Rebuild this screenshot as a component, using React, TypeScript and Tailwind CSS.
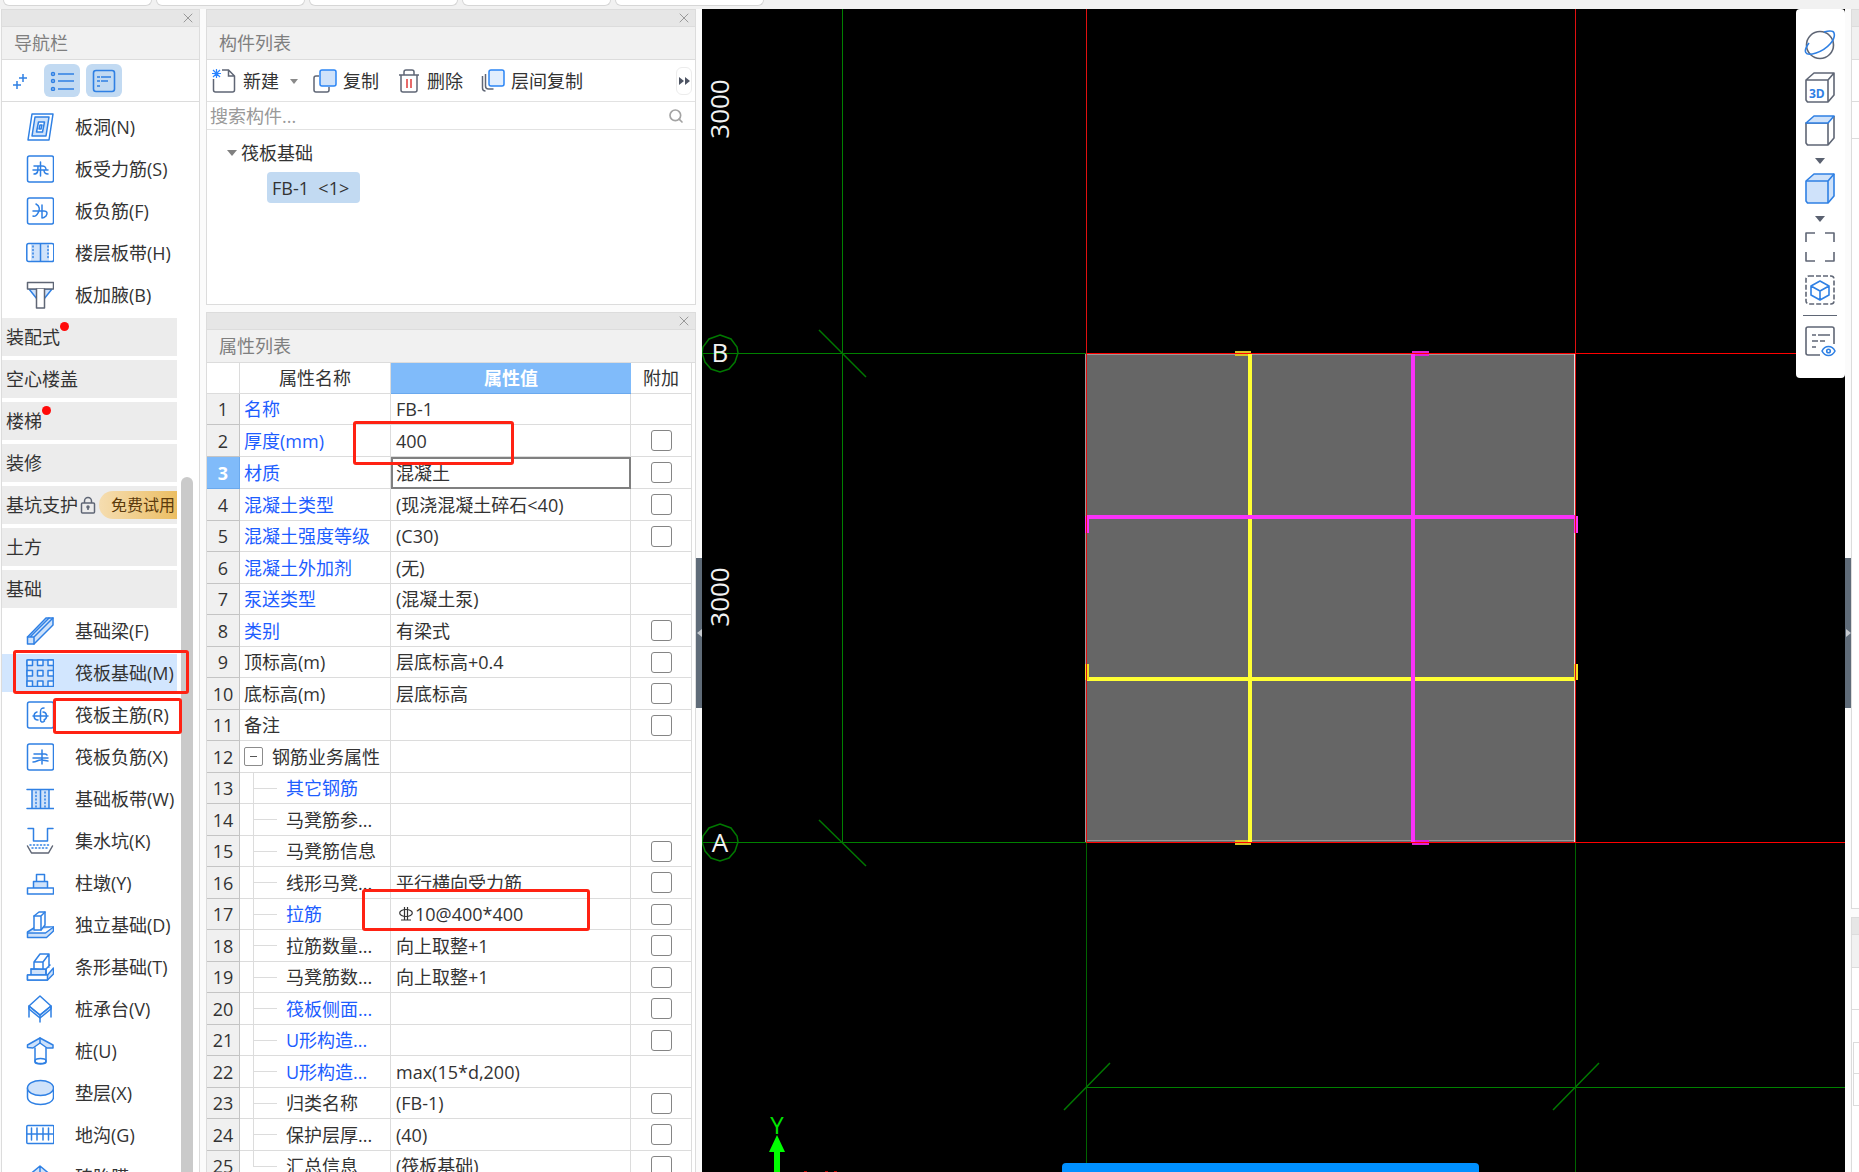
import type { ReactNode } from "react";
import { Search, X } from "lucide-react";

const BLUE = "#2f80e4";
const LIGHT = "#cfe2fa";
const GREY = "#5f6675";

const Icon = ({ children }: { children: ReactNode }) => (
  <svg viewBox="0 0 28 28" className="size-7 shrink-0" fill="none" stroke={BLUE} strokeWidth="1.5" strokeLinejoin="round" strokeLinecap="round" aria-hidden="true">
    {children}
  </svg>
);

const Frame = () => <rect x="1.5" y="1" width="26" height="26" rx="2" />;

const icons: Record<string, ReactNode> = {
  hole: (
    <>
      <path d="M6 1h21l-4 26H2z" />
      <path d="M9 4h14l-3 19H6z" fill={LIGHT} />
      <path d="M12.500 9h6l-2 10h-6z" fill="#fff" />
      <path d="M14 12h2l-1 4h-2z" />
    </>
  ),
  force: (
    <>
      <Frame />
      <path d="M14.500 7v14M8 11h8c4 0 4 2 4 4M7 15h15M8 19c4 0 4-3 4-8M18 15c0 3 1 4 4 4" />
    </>
  ),
  negative: (
    <>
      <Frame />
      <path d="M10 7c4 2 4 6 2 9-1 2-3 4-5 3M16 8v13M7 14h11c3 0 4 2 2 5M16 21c2 0 3-1 4-2" />
    </>
  ),
  strip: (
    <>
      <path d="M5 5h18v17H5z" fill={LIGHT} stroke="none" />
      <rect x="0.800" y="4.500" width="27" height="18" rx="2" />
      <path d="M14.500 5v17" />
      <path d="M7 7v14M22 7v14" strokeDasharray="1 2.500" />
    </>
  ),
  haunch: (
    <>
      <path d="M3 8l8 10V8zM26 8l-8 10V8z" fill={LIGHT} />
      <path d="M1.500 1.500h26V8h-26z" stroke={GREY} fill="#fff" />
      <path d="M10.500 8v19h8V8" stroke={GREY} fill="#fff" />
    </>
  ),
  beam: (
    <>
      <path d="M1.500 20L20 1h7v7L8 27H1.500z" fill={LIGHT} />
      <path d="M1.500 20H8v7M8 20L27 1M4 20L23 1" />
    </>
  ),
  raft: (
    <>
      <rect x="1" y="1" width="26.500" height="26.500" rx="1" fill={LIGHT} />
      <path d="M1 1h5.500v5.500H1zM11.500 1h5.500v5.500h-5.500zM22 1h5.500v5.500H22zM1 11.500h5.500V17H1zM11.500 11.500h5.500V17h-5.500zM22 11.500h5.500V17H22zM1 22h5.500v5.500H1zM11.500 22h5.500v5.500h-5.500zM22 22h5.500v5.500H22z" fill="#eef5fe" />
    </>
  ),
  mainBar: (
    <>
      <Frame />
      <path d="M18 7c-3 0-3.500 1-3.500 4v8c0 2 2 3 4 1M7 15h15M11 11c-4 1-4 8 1 8M17 11c4 0 5 6 1 8" />
    </>
  ),
  negBar: (
    <>
      <Frame />
      <path d="M16 7v14M8 11h11c1 0 2 1 2 1M7 15h15M7 19c4 0 4-2 8-2 4 0 4 1 7 1" />
    </>
  ),
  baseStrip: (
    <>
      <path d="M6 5h17v18H6z" fill={LIGHT} stroke="none" />
      <path d="M1 4.500h27M1 23.500h27M14.500 5v18M6 5v18M23 5v18" />
      <path d="M10 7v15M19 7v15" strokeDasharray="1 2.500" />
    </>
  ),
  sump: (
    <>
      <path d="M2 1.500h5.500V14h14V1.500H27" />
      <path d="M4 18h20M6 21h17" strokeDasharray="1 2.500" />
      <path d="M1.500 19l4 7h17l4-7" stroke={GREY} />
    </>
  ),
  pier: (
    <>
      <path d="M10.500 5.500h8v9h-8z" />
      <path d="M7.500 12.500h14v7h-14z" fill={LIGHT} />
      <path d="M1.500 19h26v6h-26z" fill="#fff" />
    </>
  ),
  isolated: (
    <>
      <path d="M1.500 21l8-5h18v4l-7 6.500h-19z" fill={LIGHT} />
      <path d="M1.500 22h18l8-6M8 19V5l5-4h6v13l-4 5z" fill="#fff" />
      <path d="M8 5h7l4-4M15 5v14" />
    </>
  ),
  stripBase: (
    <>
      <path d="M1.500 22h20l6-7v6l-6 6h-20zM5 16h15v6H5z" fill={LIGHT} />
      <path d="M8 16V9l6-8h9v13M8 9h9l6-8M17 9v7M5 16h15l4-4M20 16v6M1.500 22h20v5h-20z" fill="#fff" />
    </>
  ),
  cap: (
    <>
      <path d="M3 11l11 9 11-9v3l-11 9-11-9z" fill={LIGHT} />
      <path d="M14 1l11 10-11 9L3 11zM3 11v11M25 11v11M14 20v7" />
    </>
  ),
  pile: (
    <>
      <path d="M1.500 8L14 1l13 7v3h-6l-7-5-7 5-5.500-.5z" fill={LIGHT} />
      <path d="M9 11v14c0 2.500 11 2.500 11 0V11M14 1v5" />
      <ellipse cx="14.500" cy="24" rx="5.500" ry="2.500" />
    </>
  ),
  cushion: (
    <>
      <path d="M1.500 9v9c0 10 26 10 26 0V9" />
      <ellipse cx="14.500" cy="9" rx="13" ry="7.500" fill={LIGHT} />
    </>
  ),
  trench: (
    <>
      <rect x="0.800" y="4.500" width="27" height="18" rx="1" />
      <path d="M1 13h27M5.500 7v12M11 7v12M17 7v12M22.500 7v12" />
    </>
  ),
  mould: <path d="M2 13L14 3l12 10v10H2zM14 3v10M2 13l12 5 12-5" fill={LIGHT} />,
};

type NavEntry = { label: string; icon?: string; dot?: boolean; trial?: boolean; active?: boolean; mark?: "wide" | "label" };

const navEntries: NavEntry[] = [
  { label: "板洞(N)", icon: "hole" },
  { label: "板受力筋(S)", icon: "force" },
  { label: "板负筋(F)", icon: "negative" },
  { label: "楼层板带(H)", icon: "strip" },
  { label: "板加腋(B)", icon: "haunch" },
  { label: "装配式", dot: true },
  { label: "空心楼盖" },
  { label: "楼梯", dot: true },
  { label: "装修" },
  { label: "基坑支护", trial: true },
  { label: "土方" },
  { label: "基础" },
  { label: "基础梁(F)", icon: "beam" },
  { label: "筏板基础(M)", icon: "raft", active: true, mark: "wide" },
  { label: "筏板主筋(R)", icon: "mainBar", mark: "label" },
  { label: "筏板负筋(X)", icon: "negBar" },
  { label: "基础板带(W)", icon: "baseStrip" },
  { label: "集水坑(K)", icon: "sump" },
  { label: "柱墩(Y)", icon: "pier" },
  { label: "独立基础(D)", icon: "isolated" },
  { label: "条形基础(T)", icon: "stripBase" },
  { label: "桩承台(V)", icon: "cap" },
  { label: "桩(U)", icon: "pile" },
  { label: "垫层(X)", icon: "cushion" },
  { label: "地沟(G)", icon: "trench" },
  { label: "砖胎膜", icon: "mould" },
];

type Property = { name: string; value?: string; blue?: boolean; check?: boolean; child?: boolean };

const properties: Property[] = [
  { name: "名称", value: "FB-1", blue: true },
  { name: "厚度(mm)", value: "400", blue: true, check: true },
  { name: "材质", value: "混凝土", blue: true, check: true },
  { name: "混凝土类型", value: "(现浇混凝土碎石<40)", blue: true, check: true },
  { name: "混凝土强度等级", value: "(C30)", blue: true, check: true },
  { name: "混凝土外加剂", value: "(无)", blue: true },
  { name: "泵送类型", value: "(混凝土泵)", blue: true },
  { name: "类别", value: "有梁式", blue: true, check: true },
  { name: "顶标高(m)", value: "层底标高+0.4", check: true },
  { name: "底标高(m)", value: "层底标高", check: true },
  { name: "备注", check: true },
  { name: "钢筋业务属性" },
  { name: "其它钢筋", blue: true, child: true },
  { name: "马凳筋参...", child: true },
  { name: "马凳筋信息", child: true, check: true },
  { name: "线形马凳...", value: "平行横向受力筋", child: true, check: true },
  { name: "拉筋", value: "10@400*400", blue: true, child: true, check: true },
  { name: "拉筋数量...", value: "向上取整+1", child: true, check: true },
  { name: "马凳筋数...", value: "向上取整+1", child: true, check: true },
  { name: "筏板侧面...", blue: true, child: true, check: true },
  { name: "U形构造...", blue: true, child: true, check: true },
  { name: "U形构造...", value: "max(15*d,200)", blue: true, child: true },
  { name: "归类名称", value: "(FB-1)", child: true, check: true },
  { name: "保护层厚...", value: "(40)", child: true, check: true },
  { name: "汇总信息", value: "(筏板基础)", child: true, check: true },
];

const PanelHead = ({ title }: { title: string }) => (
  <div className="shrink-0">
    <div className="flex h-[17px] items-center justify-end border-b border-[#dcdcdc] bg-[#e6e6e6] pr-[3px]">
      <button type="button" aria-label="关闭">
        <X className="size-4 text-[#999]" strokeWidth={1.5} />
      </button>
    </div>
    <h2 className="flex h-[33px] items-center border-b border-[#dcdcdc] bg-[#f1f1f1] pl-3 text-[#7f7f7f]">{title}</h2>
  </div>
);

const NavItem = ({ entry }: { entry: NavEntry }) => {
  if (!entry.icon) {
    return (
      <li className="flex h-[38px] w-[175px] shrink-0 items-center overflow-hidden bg-[#ececec]">
        <button type="button" className="relative ml-1 shrink-0 leading-7">
          {entry.label}
          {entry.dot && <span className="absolute -right-[9px] -top-px size-[9px] rounded-full bg-[#ff0a0a]" />}
        </button>
        {entry.trial && (
          <>
            <svg viewBox="0 0 16 18" className="ml-[2px] h-[18px] w-4 shrink-0" fill="none" stroke={GREY} strokeWidth="1.500" aria-hidden="true">
              <rect x="1.500" y="7" width="13" height="10" rx="1" />
              <path d="M4.500 7V5a3.500 3.500 0 0 1 7 0v2M8 11v3" />
              <circle cx="8" cy="11" r="1" />
            </svg>
            <span className="ml-[3px] h-7 w-20 shrink-0 rounded-l-full bg-linear-to-r from-[#f5ddb0] to-[#ebbd5f] pl-3 text-base leading-7 text-[#5b3a0c]">免费试用</span>
          </>
        )}
      </li>
    );
  }
  return (
    <li className="relative h-[38px] shrink-0">
      <button type="button" className={`flex h-full w-[175px] items-center gap-[21px] whitespace-nowrap pl-6 ${entry.active ? "bg-[#d2e6fe]" : ""}`}>
        <Icon>{icons[entry.icon]}</Icon>
        {entry.label}
      </button>
      {entry.mark === "wide" && <span className="absolute -top-1 left-[11px] h-[44px] w-[176px] rounded-[3px] border-3 border-[#ff2213]" />}
      {entry.mark === "label" && <span className="absolute left-[51px] top-[2px] h-9 w-[129px] rounded-[3px] border-3 border-[#ff2213]" />}
    </li>
  );
};

const Navigator = () => (
  <nav className="flex w-[199px] shrink-0 flex-col overflow-hidden border border-b-0 border-[#dcdcdc] bg-white">
    <PanelHead title="导航栏" />
    <div className="flex h-[42px] shrink-0 items-center border-b border-[#dcdcdc] pl-[10px]">
      <button type="button" aria-label="添加" className="mr-4">
        <svg viewBox="0 0 16 16" className="size-4" stroke={BLUE} strokeWidth="1.500" aria-hidden="true">
          <path d="M11 1v8M7 5h8M5 8v8M1 12h8" />
        </svg>
      </button>
      <button type="button" aria-label="列表" className="mr-[6px] flex h-[33px] w-9 items-center justify-center rounded-md bg-[#c2daf2]">
        <svg viewBox="0 0 24 20" className="h-5 w-6" fill="none" stroke={BLUE} strokeWidth="1.500" aria-hidden="true">
          <path d="M8 3h16M8 10h16M8 18h16" />
          <circle cx="3" cy="3" r="1.500" />
          <circle cx="3" cy="10" r="1.500" />
          <circle cx="3" cy="18" r="1.500" />
        </svg>
      </button>
      <button type="button" aria-label="详情" className="flex h-[33px] w-9 items-center justify-center rounded-md bg-[#c2daf2]">
        <svg viewBox="0 0 24 24" className="size-6" fill="none" stroke={BLUE} strokeWidth="1.600" aria-hidden="true">
          <rect x="1.500" y="1.500" width="21" height="21" rx="2.500" />
          <path d="M5 8h3M9 8h10M5 12h3M9 12h7M5 17h3" />
        </svg>
      </button>
    </div>
    <div className="flex min-h-0 flex-1">
      <ul className="flex w-[179px] shrink-0 flex-col gap-1 pt-[6px]">
        {navEntries.map((entry) => (
          <NavItem key={entry.label} entry={entry} />
        ))}
      </ul>
      <div className="flex w-3 flex-col pt-[375px]">
        <div className="flex-1 rounded-t-full bg-[#cacaca]" />
      </div>
    </div>
  </nav>
);

const ComponentList = () => (
  <section className="flex h-[296px] shrink-0 flex-col border border-[#dcdcdc] bg-white">
    <PanelHead title="构件列表" />
    <div className="flex h-[42px] shrink-0 items-center whitespace-nowrap border-b border-[#e2e2e2] pl-[5px] pr-[3px] pt-px">
      <button type="button" className="flex items-center gap-[7px]">
        <svg viewBox="0 0 24 24" className="size-6" fill="none" stroke={GREY} strokeWidth="1.500" aria-hidden="true">
          <path d="M1.500 10v11a2 2 0 0 0 2 2h17a2 2 0 0 0 2-2V7l-6-6H10M16.500 1v6h6" />
          <path d="M1 1l7 7M8 1L1 8M4.500 0v9M0 4.500h9" stroke="#2b85ff" strokeWidth="1.200" />
        </svg>
        新建
        <svg viewBox="0 0 8 5" className="ml-1 h-[5px] w-2" aria-hidden="true">
          <path d="M0 0h8L4 5z" fill="#8a8a8a" />
        </svg>
      </button>
      <button type="button" className="ml-[15px] flex items-center gap-[6px]">
        <svg viewBox="0 0 24 24" className="size-6" fill="none" strokeWidth="1.500" aria-hidden="true">
          <path d="M6 7H3a2 2 0 0 0-2 2v12a2 2 0 0 0 2 2h11a2 2 0 0 0 2-2v-3" stroke={GREY} />
          <rect x="7" y="1" width="16" height="16" rx="2" fill={LIGHT} stroke="#2b85f5" />
        </svg>
        复制
      </button>
      <button type="button" className="ml-[18px] flex items-center gap-[6px]">
        <svg viewBox="0 0 24 24" className="size-6" fill="none" stroke={GREY} strokeWidth="1.500" aria-hidden="true">
          <path d="M2 6h20M7 6V3a2 2 0 0 1 2-2h6a2 2 0 0 1 2 2v3M4 6v15a2 2 0 0 0 2 2h12a2 2 0 0 0 2-2V6" />
          <path d="M10 10v9M14 10v9" stroke="#e03a3a" />
        </svg>
        删除
      </button>
      <button type="button" className="ml-[18px] flex items-center gap-[6px]">
        <svg viewBox="0 0 24 24" className="size-6" fill="none" strokeWidth="1.500" aria-hidden="true">
          <path d="M1.500 7v12a3 3 0 0 0 3 3M4.500 5v12a3 3 0 0 0 3 3h5" stroke={GREY} />
          <rect x="8" y="1" width="15" height="16" rx="2" fill="#e2eefd" stroke="#2b85f5" />
        </svg>
        层间复制
      </button>
      <button type="button" aria-label="更多" className="ml-auto flex h-7 w-4 items-center justify-center rounded-md border border-[#ececec]">
        <svg viewBox="0 0 11 8" className="h-2 w-[11px] shrink-0" fill="#4d5463" aria-hidden="true">
          <path d="M0 0l5 4-5 4zM6 0l5 4-5 4z" />
        </svg>
      </button>
    </div>
    <label className="flex h-7 shrink-0 items-center border-b border-[#e2e2e2] pl-[3px] pr-[11px]">
      <input type="text" aria-label="搜索构件" placeholder="搜索构件..." className="min-w-0 flex-1 leading-6 outline-none placeholder:text-[#999]" />
      <Search className="size-4 text-[#a3a3a3]" strokeWidth={2.5} />
    </label>
    <div className="pl-5 pt-[5px]">
      <button type="button" className="flex h-9 items-center gap-1">
        <svg viewBox="0 0 10 6" className="h-[6px] w-[10px]" fill="#808080" aria-hidden="true">
          <path d="M0 0h10L5 6z" />
        </svg>
        筏板基础
      </button>
      <button type="button" className="ml-10 mt-px h-[31px] w-[93px] whitespace-pre rounded-[4px] bg-[#c2daf2] pl-[5px] text-left">FB-1  &lt;1&gt;</button>
    </div>
  </section>
);

const PropertyRow = ({ item, index }: { item: Property; index: number }) => {
  const selected = index === 3;
  const last = index === properties.length;
  return (
    <tr className="odd:h-[31px] even:h-8">
      <th scope="row" className={`border-b border-r p-0 text-center leading-7 ${selected ? "border-[#6aa9ee] bg-[#80bbfa] font-bold text-white" : "border-[#c4c4c4] bg-[#f0f0f0] font-normal"}`}>
        {index}
      </th>
      <td className={`relative whitespace-nowrap border-b border-r border-[#dcdcdc] p-0 leading-7 ${item.blue ? "text-[#1d5dff]" : ""} ${item.child ? "pl-[46px]" : "pl-1"}`}>
        {item.child && (
          <>
            <span className={`absolute left-[13px] top-0 w-px bg-[#dcdcdc] ${last ? "h-4" : "h-full"}`} />
            <span className="absolute left-[13px] top-[15px] h-px w-6 bg-[#dcdcdc]" />
          </>
        )}
        {index === 12 ? (
          <span className="flex items-center gap-[9px]">
            <button type="button" aria-label="折叠" className="flex size-[19px] items-center justify-center rounded-[2px] border border-[#8c8c8c]">
              <span className="h-px w-[7px] bg-[#555]" />
            </button>
            {item.name}
          </span>
        ) : (
          item.name
        )}
      </td>
      <td className={`relative whitespace-nowrap p-0 leading-7 ${selected ? "border-2 border-[#808080] pl-[3px]" : "border-b border-r border-[#dcdcdc] pl-[5px]"}`}>
        {index === 17 && (
          <svg viewBox="0 0 14 14" className="mb-1 ml-[3px] mr-[2px] inline h-[14px] w-[14px]" fill="none" stroke="#333" strokeWidth="1.200" aria-hidden="true">
            <ellipse cx="7" cy="6" rx="6.300" ry="3.500" />
            <path d="M5.500 0v13M8.500 0v13M2 13h10" />
          </svg>
        )}
        {item.value}
        {index === 2 && <span className="absolute -left-[38px] -top-1 z-10 h-11 w-[161px] rounded-[3px] border-3 border-[#ff2213]" />}
        {index === 17 && <span className="absolute -left-[29px] -top-[10px] z-10 h-[42px] w-[228px] rounded-[3px] border-3 border-[#ff2213]" />}
      </td>
      <td className="border-b border-r border-[#dcdcdc] p-0">
        {item.check && <input type="checkbox" aria-label={`附加 ${item.name}`} className="mx-auto block size-[21px] appearance-none rounded-[3px] border border-[#858585] bg-white" />}
      </td>
    </tr>
  );
};

const PropertyList = () => (
  <section className="flex min-h-0 flex-1 flex-col overflow-hidden border border-b-0 border-[#dcdcdc] bg-white">
    <PanelHead title="属性列表" />
    <div className="min-h-0 flex-1 overflow-hidden pr-[3px]">
      <table className="w-full table-fixed border-separate border-spacing-0">
        <colgroup>
          <col className="w-[33px]" />
          <col className="w-[151px]" />
          <col />
          <col className="w-[61px]" />
        </colgroup>
        <thead>
          <tr className="h-[31px]">
            <th aria-label="序号" className="border-b border-r border-[#dcdcdc] p-0" />
            <th scope="col" className="border-b border-r border-[#dcdcdc] p-0 text-center font-normal leading-7">属性名称</th>
            <th scope="col" className="border-b border-[#6aa9ee] bg-[#80bbfa] p-0 text-center font-bold leading-7 text-white">属性值</th>
            <th scope="col" className="border-b border-r border-[#dcdcdc] p-0 text-center font-normal leading-7">附加</th>
          </tr>
        </thead>
        <tbody>
          {properties.map((item, i) => (
            <PropertyRow key={i} item={item} index={i + 1} />
          ))}
        </tbody>
      </table>
    </div>
  </section>
);

const Drawing = () => (
  <svg className="block h-full w-full" fill="none" shapeRendering="crispEdges" role="img" aria-label="筏板平面图">
    <rect x="383" y="345" width="490" height="488" fill="#666" />
    <path d="M383.500 345v488M384 831.500h488M384 345.500h489" stroke="#999" />
    <path d="M872.500 345v488" stroke="#ddd" />

    <g stroke="#008000">
      <path d="M140.500 0v834M0 344.500h385M0 833.500h385" />
      <path d="M384.500 834V1163M873.500 834V1163" stroke="#006400" />
      <line x1="385" y1="1078.500" x2="100%" y2="1078.500" />
    </g>
    <g stroke="#007800" strokeWidth="1.500" shapeRendering="auto">
      <path d="M117 321l47 47M117 811l47 46M362 1101l46-47M851 1101l46-47" />
      <path d="M18 326l11 4 6 8 1 6-3 9-6 7-9 3-9-3-6-7-3-9 1-6 6-8z" />
      <path d="M18 815l11 4 6 8 1 6-3 9-6 7-9 3-9-3-6-7-3-9 1-6 6-8z" />
    </g>

    <path d="M533 342h16v5h-16zM533 831h16v5h-16z" fill="#d9c526" />
    <path d="M710 342h17v5h-17zM710 831h17v5h-17z" fill="#e020d8" />
    <path d="M548 345v488M384 670h490" stroke="#ffff33" strokeWidth="4" />
    <path d="M711 345v488M384 508h490" stroke="#fa32fa" strokeWidth="4" />
    <path d="M385 507v17M874 507v17" stroke="#fa32fa" strokeWidth="4" />
    <path d="M385 655v16M874 655v16" stroke="#f0e020" strokeWidth="4" />

    <g stroke="#ff0000">
      <path d="M384.500 0v834M873.500 0v834" stroke="#e01010" />
      <line x1="385" y1="344.500" x2="100%" y2="344.500" />
      <line x1="385" y1="833.500" x2="100%" y2="833.500" />
    </g>

    <g fill="#f2f2f2" fontSize="26" textAnchor="middle">
      <text x="18" y="353">B</text>
      <text x="18" y="843">A</text>
      <text transform="translate(27 100) rotate(-90)">3000</text>
      <text transform="translate(27 588) rotate(-90)">3000</text>
    </g>
    <text x="75" y="1125" fill="#00e600" fontSize="24" textAnchor="middle">Y</text>
    <path d="M75 1126l8 17h-5v20h-6v-20h-5z" fill="#00ff00" shapeRendering="auto" />
    <path d="M102 1162h3M123 1162h3M132 1162h3" stroke="#c00000" />
  </svg>
);

const ViewIcon = ({ children }: { children: ReactNode }) => (
  <svg viewBox="0 0 32 32" className="size-8" fill="none" stroke={GREY} strokeWidth="1.600" strokeLinejoin="round" aria-hidden="true">
    {children}
  </svg>
);

const Caret = () => (
  <svg viewBox="0 0 10 6" className="h-[6px] w-[10px]" fill="#5a6170" aria-hidden="true">
    <path d="M0 0h10L5 6z" />
  </svg>
);

const ViewTools = () => (
  <div className="absolute right-0 top-0 flex h-[369px] w-[49px] flex-col items-center rounded-[4px] bg-white pr-[2px] pt-5">
    <button type="button" aria-label="动态观察">
      <ViewIcon>
        <circle cx="16" cy="16" r="13.500" />
        <path d="M5 14C-1 22 0 28 12 24S32 10 30 4c-1-3-6-2-10-1" stroke={BLUE} />
      </ViewIcon>
    </button>
    <button type="button" aria-label="三维" className="mt-[11px]">
      <ViewIcon>
        <path d="M2 8h22v22H3.500L2 28zM2 8l8-7h20l-6 7M30 1v22l-6 7" />
        <text x="5" y="26" fill={BLUE} stroke="none" fontSize="12" fontWeight="700">3D</text>
      </ViewIcon>
    </button>
    <button type="button" aria-label="俯视" className="mt-[11px]">
      <ViewIcon>
        <path d="M2 8h22v22H3.500L2 28zM30 1v22l-6 7" />
        <path d="M2 8l8-7h20l-6 7z" stroke={BLUE} fill={LIGHT} />
      </ViewIcon>
    </button>
    <button type="button" aria-label="选择视图" className="mt-[11px]">
      <Caret />
    </button>
    <button type="button" aria-label="实体" className="mt-[9px]">
      <ViewIcon>
        <path d="M2 8l8-7h20v22l-6 7H3.500L2 28z" stroke={BLUE} fill={LIGHT} />
        <path d="M2 8h22v22M24 8l6-7" stroke={BLUE} />
      </ViewIcon>
    </button>
    <button type="button" aria-label="显示方式" className="mt-[11px]">
      <Caret />
    </button>
    <button type="button" aria-label="全屏" className="mt-[9px]">
      <ViewIcon>
        <path d="M2 11V2h9M21 2h9v9M30 21v9h-9M11 30H2v-9" />
      </ViewIcon>
    </button>
    <button type="button" aria-label="局部三维" className="mt-[11px]">
      <ViewIcon>
        <rect x="2" y="2" width="28" height="28" rx="3" strokeDasharray="5 2" />
        <path d="M16 7l9 5v9l-9 5-9-5v-9zM7 12l9 5 9-5M16 17v9" stroke={BLUE} />
      </ViewIcon>
    </button>
    <div className="mt-[9px] h-px w-[34px] bg-[#5f6675]" />
    <button type="button" aria-label="显示设置" className="mt-[9px]">
      <ViewIcon>
        <path d="M16 30H4a2 2 0 0 1-2-2V4a2 2 0 0 1 2-2h24a2 2 0 0 1 2 2v15M8 10h4M14 10h12M8 16h6M16 16h5M8 22h4" />
        <path d="M18 26c3-6 10-6 13 0-3 6-10 6-13 0z" stroke={BLUE} />
        <circle cx="24.500" cy="26" r="1.800" stroke={BLUE} />
      </ViewIcon>
    </button>
  </div>
);

const Handle = ({ label, children }: { label: string; children: ReactNode }) => (
  <div className="flex w-[6px] shrink-0 flex-col pt-[549px]">
    <button type="button" aria-label={label} className="flex h-[150px] items-center justify-center bg-[#5f6b78]">
      <svg viewBox="0 0 5 8" className="h-2 w-[5px]" fill="#c5c9ce" aria-hidden="true">
        {children}
      </svg>
    </button>
  </div>
);

const EdgePanels = () => (
  <aside className="flex w-2 shrink-0 flex-col gap-2 overflow-hidden">
    <div className="flex h-[900px] flex-col border-y border-l border-[#dcdcdc] bg-white">
      <div className="h-[17px] border-b border-[#dcdcdc] bg-[#e6e6e6]" />
      <div className="h-[33px] border-b border-[#dcdcdc] bg-[#f1f1f1]" />
      <div className="h-[42px] border-b border-[#dcdcdc]" />
      <div className="h-[37px] border-b border-[#dcdcdc]" />
    </div>
    <div className="flex flex-1 flex-col border-l border-t border-[#dcdcdc] bg-white">
      <div className="h-[17px] border-b border-[#dcdcdc] bg-[#e6e6e6]" />
      <div className="h-[33px] border-b border-[#dcdcdc] bg-[#f1f1f1]" />
      <div className="h-[42px] border-b border-[#dcdcdc]" />
      <div className="ml-px mt-8 h-8 border-y border-l border-[#dcdcdc]" />
      <div className="ml-px h-8 border-b border-l border-[#dcdcdc]" />
    </div>
  </aside>
);

const App = () => {
  return (
    <div className="flex h-screen flex-col overflow-hidden bg-[#fbfbfb] font-['Open_Sans','Noto_Sans_CJK_SC',sans-serif] text-lg leading-7 text-[#333]">
      <header className="flex h-[9px] shrink-0 gap-1 bg-[#f1f1f1] pl-[3px]">
        {[0, 1, 2, 3, 4].map((tab) => (
          <div key={tab} className="h-[6px] w-[149px] rounded-b-md border border-t-0 border-[#d6d6d6] bg-white" />
        ))}
      </header>
      <div className="flex min-h-0 flex-1 pl-px">
        <Navigator />
        <div className="ml-[6px] flex w-[490px] shrink-0 flex-col gap-[7px]">
          <ComponentList />
          <PropertyList />
        </div>
        <Handle label="收起左侧">
          <path d="M5 0v8L0 4z" />
        </Handle>
        <main className="relative min-w-0 flex-1 overflow-hidden bg-black">
          <Drawing />
          <ViewTools />
          <div className="absolute bottom-0 left-[360px] h-[9px] w-[417px] rounded-t-[4px] bg-[#0090ff]" />
        </main>
        <Handle label="收起右侧">
          <path d="M0 0v8l5-4z" />
        </Handle>
        <EdgePanels />
      </div>
    </div>
  );
};

export default App;
